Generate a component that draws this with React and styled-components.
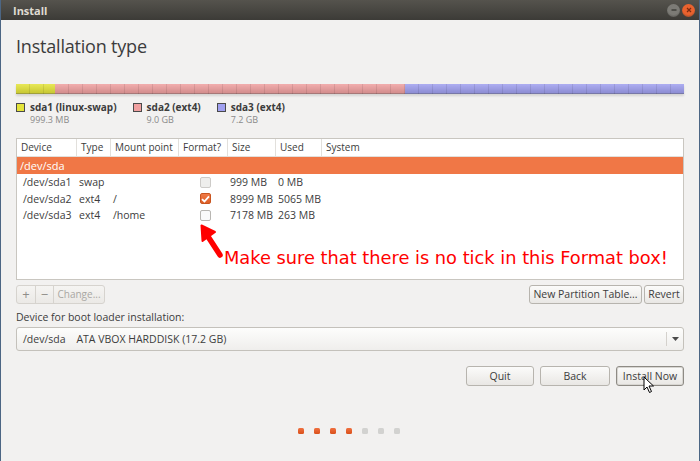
import React from 'react';
import styled, { createGlobalStyle } from 'styled-components';

const GlobalStyle = createGlobalStyle`
  html, body { margin: 0; padding: 0; background: #f2f1f0; }
  body { font-family: "Open Sans", "Noto Sans", sans-serif; color: #3c3c3c; }
  * { box-sizing: border-box; }
`;

const partitions = [
  { name: 'sda1 (linux-swap)', size: '999.3 MB', color: '#e4e43a', width: 39 },
  { name: 'sda2 (ext4)', size: '9.0 GB', color: '#f0a0a0', width: 350 },
  { name: 'sda3 (ext4)', size: '7.2 GB', color: '#a0a0f0', width: 279 },
];

const rows = [
  { dev: '/dev/sda1', type: 'swap', mount: '', format: false, dim: true, size: '999 MB', used: '0 MB' },
  { dev: '/dev/sda2', type: 'ext4', mount: '/', format: true, size: '8999 MB', used: '5065 MB' },
  { dev: '/dev/sda3', type: 'ext4', mount: '/home', format: false, size: '7178 MB', used: '263 MB' },
];

const cols = '60px 34px 68px 49px 48px 46px 1fr';

const App = () => {
  return (
    <Window>
      <GlobalStyle />
      <TitleBar>
        <span>Install</span>
        <WinButtons>
          <WinBtn $color="#7c7b76">
            <svg width="6" height="6" viewBox="0 0 6 6"><path d="M0.5 3h5" stroke="#3c3b37" strokeWidth="1.4" /></svg>
          </WinBtn>
          <WinBtn $color="#e9622e">
            <svg width="6" height="6" viewBox="0 0 6 6"><path d="M1 1l4 4M5 1l-4 4" stroke="#7a2a10" strokeWidth="1.2" /></svg>
          </WinBtn>
        </WinButtons>
      </TitleBar>
      <Body>
        <Heading>Installation type</Heading>
        <PartBar>
          {partitions.map((p) => (
            <Segment key={p.name} $color={p.color} style={{ width: p.width }} />
          ))}
        </PartBar>
        <Legend>
          {partitions.map((p) => (
            <LegendItem key={p.name}>
              <Swatch $color={p.color} />
              <LegendText>
                <LegendName>{p.name}</LegendName>
                <LegendSize>{p.size}</LegendSize>
              </LegendText>
            </LegendItem>
          ))}
        </Legend>
        <TableBox>
          <HeaderRow>
            {['Device', 'Type', 'Mount point', 'Format?', 'Size', 'Used', 'System'].map((h) => (
              <HeaderCell key={h}>{h}</HeaderCell>
            ))}
          </HeaderRow>
          <DiskRow>/dev/sda</DiskRow>
          {rows.map((r) => (
            <Row key={r.dev}>
              <Cell $pad={6}>{r.dev}</Cell>
              <Cell>{r.type}</Cell>
              <Cell>{r.mount}</Cell>
              <Cell $center>
                <Check $checked={r.format} $dim={r.dim}>
                  {r.format && (
                    <svg width="9" height="8" viewBox="0 0 9 8">
                      <path d="M1 4.2l2.4 2.3L8 1.3" fill="none" stroke="#fff" strokeWidth="1.8" />
                    </svg>
                  )}
                </Check>
              </Cell>
              <Cell>{r.size}</Cell>
              <Cell>{r.used}</Cell>
              <Cell />
            </Row>
          ))}
          <Arrow width="30" height="36" viewBox="0 0 30 36">
            <path d="M21 32 L8 12" stroke="#ff0000" strokeWidth="5.5" strokeLinecap="round" fill="none" />
            <path d="M2.5 2.5 L3.5 18 L16 9 Z" fill="#ff0000" stroke="#ff0000" strokeWidth="2" strokeLinejoin="round" />
          </Arrow>
          <Note>Make sure that there is no tick in this Format box!</Note>
        </TableBox>
        <ToolRow>
          <BtnGroup>
            <GroupBtn $w={19} $big>+</GroupBtn>
            <GroupBtn $w={18} $big>−</GroupBtn>
            <GroupBtn $w={50}>Change...</GroupBtn>
          </BtnGroup>
          <RightBtns>
            <Button $w={113}>New Partition Table...</Button>
            <Button $w={40}>Revert</Button>
          </RightBtns>
        </ToolRow>
        <Label>Device for boot loader installation:</Label>
        <Combo>
          <ComboText>/dev/sda&nbsp;&nbsp;&nbsp;&nbsp;ATA VBOX HARDDISK (17.2 GB)</ComboText>
          <ComboArrow>
            <svg width="7" height="4" viewBox="0 0 7 4"><path d="M0 0h7L3.5 4z" fill="#4a4a4a" /></svg>
          </ComboArrow>
        </Combo>
        <Actions>
          <Button $w={68} $h={20}>Quit</Button>
          <Button $w={70} $h={20}>Back</Button>
          <Button $w={68} $h={20} $focus>
            Install Now
            <Cursor width="12" height="18" viewBox="0 0 12 18">
              <path d="M1 1v13l3-3 2.5 5.5 2-1L6 10h4.5z" fill="#fff" stroke="#000" strokeWidth="1" strokeLinejoin="round" />
            </Cursor>
          </Button>
        </Actions>
        <Dots>
          {[1, 1, 1, 1, 0, 0, 0].map((on, i) => (
            <Dot key={i} $on={on} />
          ))}
        </Dots>
      </Body>
    </Window>
  );
};

const Window = styled.div`
  width: 700px;
  height: 461px;
  background: #f2f1f0;
  border-left: 1px solid #4c6684;
  border-right: 1px solid #4c6684;
  display: flex;
  flex-direction: column;
  overflow: hidden;
`;

const TitleBar = styled.div`
  height: 20px;
  flex: none;
  background: linear-gradient(#55534d, #3c3b37);
  display: flex;
  align-items: center;
  justify-content: space-between;
  padding: 0 4px 0 12px;
  span {
    color: #dfdbd2;
    font-weight: bold;
    font-size: 11px;
  }
`;

const WinButtons = styled.div`
  display: flex;
  gap: 2px;
`;

const WinBtn = styled.div`
  width: 13px;
  height: 13px;
  border-radius: 50%;
  background: radial-gradient(circle at 50% 35%, ${({ $color }) => $color}, ${({ $color }) => $color} 55%, #2a2926 130%);
  display: flex;
  align-items: center;
  justify-content: center;
`;

const Body = styled.div`
  flex: 1;
  padding: 0 15px 0 15px;
  display: flex;
  flex-direction: column;
`;

const Heading = styled.h1`
  margin: 14px 0 0 0;
  height: 29px;
  font-size: 18px;
  font-weight: normal;
  letter-spacing: -0.2px;
  color: #3c3c3c;
`;

const PartBar = styled.div`
  margin-top: 21px;
  height: 10px;
  display: flex;
  box-shadow: 0 2px 2px rgba(0, 0, 0, 0.12);
`;

const Segment = styled.div`
  height: 100%;
  background-color: ${({ $color }) => $color};
  background-image:
    repeating-linear-gradient(90deg, transparent 0 13px, rgba(0, 0, 0, 0.09) 13px 14px),
    linear-gradient(rgba(255, 255, 255, 0.15), rgba(0, 0, 0, 0.12));
  border-bottom: 1px solid rgba(0, 0, 0, 0.3);
`;

const Legend = styled.div`
  display: flex;
  gap: 16px;
  margin-top: 7px;
  height: 37px;
`;

const LegendItem = styled.div`
  display: flex;
  gap: 5px;
  align-items: flex-start;
`;

const LegendText = styled.div`
  display: flex;
  flex-direction: column;
  gap: 1px;
`;

const Swatch = styled.div`
  width: 9px;
  height: 9px;
  margin-top: 2px;
  background: ${({ $color }) => $color};
  border: 1px solid #4a4a4a;
`;

const LegendName = styled.div`
  font-size: 10px;
  font-weight: bold;
  line-height: 13px;
  color: #3c3c3c;
`;

const LegendSize = styled.div`
  font-size: 9px;
  line-height: 10px;
  color: #8a8a8a;
`;

const TableBox = styled.div`
  position: relative;
  height: 142px;
  background: #ffffff;
  border: 1px solid #c9c6c0;
`;

const HeaderRow = styled.div`
  display: grid;
  grid-template-columns: ${cols};
  height: 18px;
  border-bottom: 1px solid #e2e0dc;
`;

const HeaderCell = styled.div`
  font-size: 10px;
  line-height: 17px;
  padding-left: 4px;
  color: #3c3c3c;
  border-right: 1px solid #e2e0dc;
  white-space: nowrap;
  &:last-child { border-right: none; }
`;

const DiskRow = styled.div`
  height: 17px;
  background: #f07746;
  color: #ffffff;
  font-size: 11px;
  line-height: 17px;
  padding-left: 3px;
`;

const Row = styled.div`
  display: grid;
  grid-template-columns: ${cols};
  height: 16.5px;
  align-items: center;
`;

const Cell = styled.div`
  font-size: 10.5px;
  line-height: 16px;
  padding-left: ${({ $pad }) => ($pad ? $pad : 2)}px;
  color: #3c3c3c;
  white-space: nowrap;
  display: flex;
  justify-content: ${({ $center }) => ($center ? 'center' : 'flex-start')};
`;

const Check = styled.div`
  width: 11px;
  height: 11px;
  margin-left: 1px;
  border-radius: 2px;
  border: 1px solid ${({ $checked }) => ($checked ? '#c9541f' : '#b8b6b2')};
  background: ${({ $checked, $dim }) =>
    $checked ? 'linear-gradient(#f07a46, #dd5f28)' : $dim ? '#e8e7e5' : '#fafafa'};
  opacity: ${({ $dim }) => ($dim ? 0.7 : 1)};
  display: flex;
  align-items: center;
  justify-content: center;
`;

const Arrow = styled.svg`
  position: absolute;
  left: 182px;
  top: 84px;
`;

const Note = styled.div`
  position: absolute;
  left: 207px;
  top: 108px;
  font-family: "DejaVu Sans", sans-serif;
  font-size: 17.8px;
  color: #ff0000;
  white-space: nowrap;
`;

const ToolRow = styled.div`
  display: flex;
  justify-content: space-between;
  margin-top: 5px;
`;

const BtnGroup = styled.div`
  display: flex;
  height: 19px;
  border: 1px solid #d6d3ce;
  border-radius: 3px;
  background: linear-gradient(#f5f4f2, #ebe9e6);
`;

const GroupBtn = styled.div`
  width: ${({ $w }) => $w}px;
  font-size: ${({ $big }) => ($big ? 13 : 10)}px;
  line-height: 17px;
  text-align: center;
  color: ${({ $big }) => ($big ? '#8f8d89' : '#a9a7a3')};
  border-right: 1px solid #d6d3ce;
  &:last-child { border-right: none; }
`;

const RightBtns = styled.div`
  display: flex;
  gap: 2px;
`;

const Button = styled.div`
  position: relative;
  width: ${({ $w }) => $w}px;
  height: ${({ $h }) => $h || 19}px;
  border: 1px solid ${({ $focus }) => ($focus ? '#8e8b85' : '#b7b4ae')};
  box-shadow: ${({ $focus }) => ($focus ? 'inset 0 0 0 1px #d8d6d2' : 'none')};
  border-radius: 3px;
  background: linear-gradient(#fbfbfa, #e9e7e4);
  font-size: 10.5px;
  line-height: ${({ $h }) => ($h || 19) - 2}px;
  text-align: center;
  color: #3c3c3c;
  white-space: nowrap;
`;

const Label = styled.div`
  margin-top: 6px;
  font-size: 10.5px;
  line-height: 14px;
  color: #3c3c3c;
`;

const Combo = styled.div`
  margin-top: 3px;
  height: 24px;
  display: flex;
  border: 1px solid #c4c1bb;
  border-radius: 3px;
  background: linear-gradient(#fdfdfc, #efeeec);
`;

const ComboText = styled.div`
  flex: 1;
  font-size: 10.5px;
  line-height: 22px;
  padding-left: 6px;
  color: #3c3c3c;
`;

const ComboArrow = styled.div`
  width: 17px;
  margin: 4px 0;
  border-left: 1px solid #d4d1cc;
  display: flex;
  align-items: center;
  justify-content: center;
`;

const Actions = styled.div`
  margin-top: 15px;
  display: flex;
  justify-content: flex-end;
  gap: 6px;
`;

const Cursor = styled.svg`
  position: absolute;
  left: 26px;
  top: 9px;
`;

const Dots = styled.div`
  margin-top: 42px;
  display: flex;
  justify-content: center;
  gap: 10px;
  padding-right: 2px;
`;

const Dot = styled.div`
  width: 6px;
  height: 6px;
  border-radius: 1.5px;
  background: ${({ $on }) => ($on ? 'linear-gradient(#f07040, #d9501a)' : '#d2d2d0')};
`;

export default App;
